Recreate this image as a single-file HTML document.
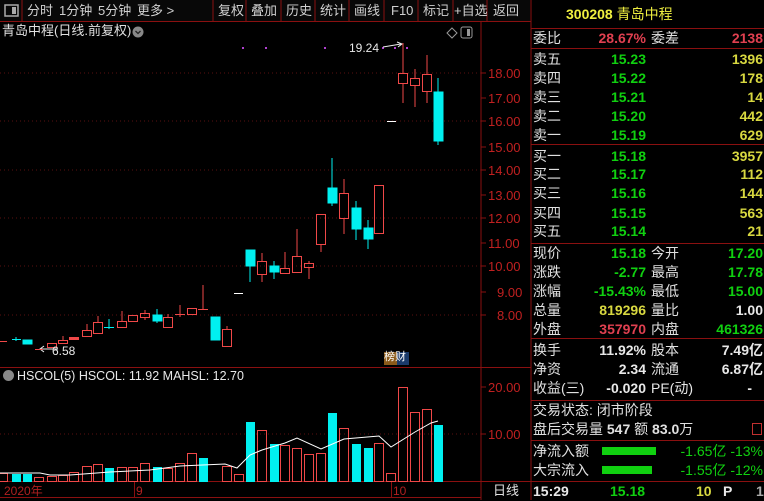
<!DOCTYPE html>
<html><head><meta charset="utf-8"><style>
*{margin:0;padding:0;box-sizing:border-box}
body{width:764px;height:500px;background:#000;overflow:hidden;position:relative;font-family:"Liberation Sans","Noto Sans CJK SC",sans-serif;}
.t{position:absolute;white-space:nowrap;line-height:1}
.tb{font-size:13px;color:#d0d0d0;top:4px}
.r{position:absolute;white-space:nowrap;font-size:14px;line-height:19px;height:19px}
.l{left:533px;color:#e0e0e0}
.v{right:118px;text-align:right;font-weight:bold;font-family:"Liberation Sans",sans-serif}
.l2{left:651px;color:#e0e0e0}
.v2{right:1px;text-align:right;font-weight:bold}
.g{color:#10d010}.y{color:#d8d840}.rd{color:#e04050}.w{color:#e8e8e8}
</style></head><body>
<svg width="764" height="500" style="position:absolute;left:0;top:0">
<rect x="0" y="0" width="530" height="21" fill="#080808"/>
<rect x="5" y="5" width="13" height="11" fill="none" stroke="#aaa" stroke-width="1.5"/><rect x="12" y="7" width="4" height="7" fill="#aaa"/>
<g stroke="#8a1010" stroke-width="1">
<line x1="22" y1="0" x2="22" y2="21"/><line x1="213" y1="0" x2="213" y2="21"/><line x1="246" y1="0" x2="246" y2="21"/><line x1="281" y1="0" x2="281" y2="21"/><line x1="315" y1="0" x2="315" y2="21"/><line x1="349" y1="0" x2="349" y2="21"/><line x1="384" y1="0" x2="384" y2="21"/><line x1="418" y1="0" x2="418" y2="21"/><line x1="453" y1="0" x2="453" y2="21"/><line x1="487" y1="0" x2="487" y2="21"/>
<line x1="0" y1="21.5" x2="531" y2="21.5"/>
<line x1="481" y1="22" x2="481" y2="500"/>
<line x1="531" y1="0" x2="531" y2="500"/>
<line x1="0" y1="367.5" x2="531" y2="367.5"/>
<line x1="0" y1="481.5" x2="764" y2="481.5"/>
<line x1="0" y1="497.5" x2="481" y2="497.5"/>
<line x1="531" y1="28.5" x2="764" y2="28.5"/>
<line x1="531" y1="48.5" x2="764" y2="48.5"/>
<line x1="531" y1="144.5" x2="764" y2="144.5"/>
<line x1="531" y1="243.5" x2="764" y2="243.5"/>
<line x1="531" y1="338.5" x2="764" y2="338.5"/>
<line x1="531" y1="400.5" x2="764" y2="400.5"/>
<line x1="531" y1="440.5" x2="764" y2="440.5"/>
<line x1="134.5" y1="482" x2="134.5" y2="497"/><line x1="391.5" y1="482" x2="391.5" y2="497"/>
</g>
<circle cx="138" cy="32" r="5.5" fill="#888"/><path d="M135.5 31 L138 33.5 L140.5 31" stroke="#222" fill="none" stroke-width="1.3"/>
<path d="M452 28 L457 33 L452 38 L447 33 Z" fill="none" stroke="#999"/>
<rect x="461" y="27" width="11" height="11" rx="2" fill="none" stroke="#999"/><rect x="467" y="29" width="3" height="7" fill="#999"/>
<g stroke="#5a1010" stroke-dasharray="1,3">
<line x1="0" y1="73" x2="481" y2="73"/><line x1="0" y1="121" x2="481" y2="121"/><line x1="0" y1="170" x2="481" y2="170"/><line x1="0" y1="218" x2="481" y2="218"/><line x1="0" y1="266" x2="481" y2="266"/><line x1="0" y1="315" x2="481" y2="315"/><line x1="0" y1="434" x2="481" y2="434"/>
</g>
<g stroke="#8a1010"><line x1="481" y1="73" x2="486" y2="73"/><line x1="481" y1="98" x2="486" y2="98"/><line x1="481" y1="121" x2="486" y2="121"/><line x1="481" y1="147" x2="486" y2="147"/><line x1="481" y1="170" x2="486" y2="170"/><line x1="481" y1="195" x2="486" y2="195"/><line x1="481" y1="218" x2="486" y2="218"/><line x1="481" y1="243" x2="486" y2="243"/><line x1="481" y1="266" x2="486" y2="266"/><line x1="481" y1="292" x2="486" y2="292"/><line x1="481" y1="315" x2="486" y2="315"/><line x1="481" y1="387" x2="486" y2="387"/><line x1="481" y1="434" x2="486" y2="434"/></g>
<g fill="#b040d0"><rect x="242" y="47" width="2" height="2"/><rect x="265" y="47" width="2" height="2"/><rect x="324" y="47" width="2" height="2"/><rect x="382" y="47" width="2" height="2"/><rect x="394" y="47" width="2" height="2"/><rect x="406" y="47" width="2" height="2"/></g>
<path d="M383 47 L401 44 M397 42 L402 44 L398 47" stroke="#eee" fill="none"/>
<path d="M41 349 L58 349 M44 346 L40 349 L44 352" stroke="#eee" fill="none"/>
<g stroke="#f04848" fill="none" stroke-width="1">
<line x1="0" y1="341.5" x2="7" y2="341.5"/>
<line x1="35" y1="349.5" x2="43" y2="349.5"/>
<rect x="47.5" y="343.5" width="9" height="4"/>
<rect x="58.5" y="340.5" width="9" height="3"/><line x1="63" y1="336" x2="63" y2="340"/>
<rect x="69.5" y="337.5" width="9" height="2" fill="#f04848"/>
<rect x="82.5" y="330.5" width="9" height="6"/><line x1="87" y1="324" x2="87" y2="330"/>
<rect x="93.5" y="322.5" width="9" height="11"/><line x1="98" y1="316" x2="98" y2="322"/>
<rect x="117.5" y="321.5" width="9" height="6"/><line x1="122" y1="311" x2="122" y2="321"/>
<rect x="128.5" y="315.5" width="9" height="6"/>
<rect x="140.5" y="313.5" width="9" height="4"/><line x1="145" y1="310" x2="145" y2="313"/><line x1="145" y1="318" x2="145" y2="320"/>
<rect x="163.5" y="317.5" width="9" height="10"/><line x1="168" y1="314" x2="168" y2="317"/>
<line x1="175" y1="314.5" x2="185" y2="314.5"/><line x1="180" y1="305" x2="180" y2="317"/>
<rect x="187.5" y="308.5" width="9" height="6"/>
<line x1="198" y1="309.5" x2="208" y2="309.5"/><line x1="203" y1="285" x2="203" y2="309"/>
<rect x="222.5" y="329.5" width="9" height="17"/><line x1="227" y1="326" x2="227" y2="329"/>
<rect x="257.5" y="261.5" width="9" height="13"/><line x1="262" y1="253" x2="262" y2="261"/><line x1="262" y1="275" x2="262" y2="282"/>
<rect x="280.5" y="268.5" width="9" height="5"/><line x1="285" y1="252" x2="285" y2="268"/>
<rect x="292.5" y="256.5" width="9" height="16"/><line x1="297" y1="229" x2="297" y2="256"/>
<rect x="304.5" y="263.5" width="9" height="4"/><line x1="309" y1="261" x2="309" y2="263"/><line x1="309" y1="268" x2="309" y2="279"/>
<rect x="316.5" y="214.5" width="9" height="30"/><line x1="321" y1="245" x2="321" y2="252"/>
<rect x="339.5" y="193.5" width="9" height="25"/><line x1="344" y1="179" x2="344" y2="193"/><line x1="344" y1="219" x2="344" y2="234"/>
<rect x="374.5" y="185.5" width="9" height="48"/>
<rect x="398.5" y="73.5" width="9" height="10"/><line x1="403" y1="43" x2="403" y2="73"/><line x1="403" y1="84" x2="403" y2="103"/>
<rect x="410.5" y="78.5" width="9" height="7"/><line x1="415" y1="69" x2="415" y2="78"/><line x1="415" y1="86" x2="415" y2="107"/>
<rect x="422.5" y="74.5" width="9" height="17"/><line x1="427" y1="55" x2="427" y2="74"/><line x1="427" y1="92" x2="427" y2="103"/>
</g>
<g fill="#00f0f0" stroke="#00f0f0">
<line x1="12" y1="339.5" x2="21" y2="339.5"/><line x1="16" y1="337" x2="16" y2="341"/>
<rect x="23" y="340" width="9" height="4"/>
<line x1="104" y1="327.5" x2="114" y2="327.5"/><line x1="109" y1="319" x2="109" y2="329"/>
<rect x="153" y="315" width="9" height="6"/><line x1="157" y1="309" x2="157" y2="323"/>
<rect x="211" y="317" width="9" height="23"/>
<rect x="246" y="250" width="9" height="16"/><line x1="250" y1="266" x2="250" y2="282"/>
<rect x="270" y="266" width="9" height="6"/><line x1="274" y1="261" x2="274" y2="279"/>
<rect x="328" y="188" width="9" height="15"/><line x1="332" y1="158" x2="332" y2="206"/>
<rect x="352" y="208" width="9" height="21"/><line x1="356" y1="201" x2="356" y2="240"/>
<rect x="364" y="228" width="9" height="11"/><line x1="368" y1="220" x2="368" y2="249"/>
<rect x="434" y="92" width="9" height="49"/><line x1="438" y1="78" x2="438" y2="145"/>
</g>
<g stroke="#fff"><line x1="234" y1="293.5" x2="243" y2="293.5"/><line x1="387" y1="121.5" x2="396" y2="121.5"/></g>
<rect x="384" y="352" width="13" height="13" fill="#8a5a1a"/><rect x="397" y="352" width="12" height="13" fill="#1a3a6a"/>
<g stroke="#f04848" fill="none">
<rect x="-1.5" y="473.5" width="9" height="8"/><rect x="34.5" y="477.5" width="9" height="4"/><rect x="47.5" y="476.5" width="9" height="5"/><rect x="58.5" y="475.5" width="9" height="6"/><rect x="69.5" y="472.5" width="9" height="9"/><rect x="82.5" y="466.5" width="9" height="15"/><rect x="93.5" y="464.5" width="9" height="17"/><rect x="117.5" y="467.5" width="9" height="14"/><rect x="128.5" y="467.5" width="9" height="14"/><rect x="140.5" y="463.5" width="9" height="18"/><rect x="163.5" y="468.5" width="9" height="13"/><rect x="175.5" y="463.5" width="9" height="18"/><rect x="187.5" y="453.5" width="9" height="28"/><rect x="222.5" y="466.5" width="9" height="15"/><rect x="234.5" y="474.5" width="9" height="7"/><rect x="257.5" y="430.5" width="9" height="51"/><rect x="280.5" y="445.5" width="9" height="36"/><rect x="292.5" y="448.5" width="9" height="33"/><rect x="304.5" y="454.5" width="9" height="27"/><rect x="316.5" y="453.5" width="9" height="28"/><rect x="339.5" y="428.5" width="9" height="53"/><rect x="374.5" y="443.5" width="9" height="38"/><rect x="386.5" y="473.5" width="9" height="8"/><rect x="398.5" y="387.5" width="9" height="94"/><rect x="410.5" y="412.5" width="9" height="69"/><rect x="422.5" y="409.5" width="9" height="72"/>
</g>
<g fill="#00f0f0"><rect x="12" y="474" width="9" height="8"/><rect x="23" y="474" width="9" height="8"/><rect x="105" y="468" width="9" height="14"/><rect x="153" y="467" width="9" height="15"/><rect x="199" y="458" width="9" height="24"/><rect x="246" y="422" width="9" height="60"/><rect x="270" y="444" width="9" height="38"/><rect x="328" y="413" width="9" height="69"/><rect x="352" y="444" width="9" height="38"/><rect x="364" y="448" width="9" height="34"/><rect x="434" y="425" width="9" height="57"/></g>
<polyline fill="none" stroke="#fff" points="0,473 40,473 50,475 70,475 110,472 150,470 180,466 225,464 237,468 250,455 262,450 285,443 297,438 321,449 344,439 379,436 391,447 415,432 431,423 438,421"/>
</svg>
<div class="t tb" style="left:27px">分时</div><div class="t tb" style="left:59px">1分钟</div><div class="t tb" style="left:98px">5分钟</div><div class="t tb" style="left:137px">更多 &gt;</div>
<div class="t tb" style="left:218px">复权</div><div class="t tb" style="left:251px">叠加</div><div class="t tb" style="left:286px">历史</div><div class="t tb" style="left:320px">统计</div><div class="t tb" style="left:354px">画线</div><div class="t tb" style="left:391px">F10</div><div class="t tb" style="left:423px">标记</div><div class="t tb" style="left:454px">+自选</div><div class="t tb" style="left:493px">返回</div>
<div class="t" style="left:2px;top:24px;font-size:13px;color:#e0e0e0">青岛中程(日线.前复权)</div>
<div class="t" style="left:349px;top:42px;font-size:12px;color:#e8e8e8">19.24</div>
<div class="t" style="left:52px;top:345px;font-size:12px;color:#e8e8e8">6.58</div>
<div class="t" style="left:384px;top:352px;font-size:11px;color:#fff">榜财</div>
<div class="t" style="left:17px;top:370px;font-size:12.5px;color:#e8e8e8">HSCOL(5) HSCOL: 11.92 MAHSL: 12.70</div>
<div style="position:absolute;left:3px;top:370px;width:11px;height:11px;border-radius:50%;background:#888"></div>
<div class="t" style="left:4px;top:485px;font-size:12px;color:#b02020">2020年</div>
<div class="t" style="left:136px;top:485px;font-size:12px;color:#b02020">9</div>
<div class="t" style="left:393px;top:485px;font-size:12px;color:#b02020">10</div>
<div class="t" style="left:493px;top:484px;font-size:13px;color:#e0e0e0">日线</div>
<div style="position:absolute;left:488px;top:0;font-size:13px;color:#c02020;line-height:1">
<div class="t" style="top:67px">18.00</div><div class="t" style="top:92px">17.00</div><div class="t" style="top:115px">16.00</div><div class="t" style="top:141px">15.00</div><div class="t" style="top:164px">14.00</div><div class="t" style="top:189px">13.00</div><div class="t" style="top:212px">12.00</div><div class="t" style="top:237px">11.00</div><div class="t" style="top:260px">10.00</div><div class="t" style="top:286px;left:9px">9.00</div><div class="t" style="top:309px;left:9px">8.00</div><div class="t" style="top:381px">20.00</div><div class="t" style="top:428px">10.00</div>
</div>
<div class="t" style="left:566px;top:7px;font-size:14px;color:#f0f040;font-weight:bold">300208 <span style="font-weight:normal">青岛中程</span></div>
<div class="r l" style="top:29px">委比</div><div class="r v rd" style="top:29px">28.67%</div><div class="r l2" style="top:29px">委差</div><div class="r v2 rd" style="top:29px">2138</div>
<div class="r l" style="top:50px">卖五</div><div class="r v g" style="top:50px">15.23</div><div class="r v2 y" style="top:50px">1396</div>
<div class="r l" style="top:69px">卖四</div><div class="r v g" style="top:69px">15.22</div><div class="r v2 y" style="top:69px">178</div>
<div class="r l" style="top:88px">卖三</div><div class="r v g" style="top:88px">15.21</div><div class="r v2 y" style="top:88px">14</div>
<div class="r l" style="top:107px">卖二</div><div class="r v g" style="top:107px">15.20</div><div class="r v2 y" style="top:107px">442</div>
<div class="r l" style="top:126px">卖一</div><div class="r v g" style="top:126px">15.19</div><div class="r v2 y" style="top:126px">629</div>
<div class="r l" style="top:147px">买一</div><div class="r v g" style="top:147px">15.18</div><div class="r v2 y" style="top:147px">3957</div>
<div class="r l" style="top:165px">买二</div><div class="r v g" style="top:165px">15.17</div><div class="r v2 y" style="top:165px">112</div>
<div class="r l" style="top:184px">买三</div><div class="r v g" style="top:184px">15.16</div><div class="r v2 y" style="top:184px">144</div>
<div class="r l" style="top:204px">买四</div><div class="r v g" style="top:204px">15.15</div><div class="r v2 y" style="top:204px">563</div>
<div class="r l" style="top:222px">买五</div><div class="r v g" style="top:222px">15.14</div><div class="r v2 y" style="top:222px">21</div>
<div class="r l" style="top:244px">现价</div><div class="r v g" style="top:244px">15.18</div><div class="r l2" style="top:244px">今开</div><div class="r v2 g" style="top:244px">17.20</div>
<div class="r l" style="top:263px">涨跌</div><div class="r v g" style="top:263px">-2.77</div><div class="r l2" style="top:263px">最高</div><div class="r v2 g" style="top:263px">17.78</div>
<div class="r l" style="top:282px">涨幅</div><div class="r v g" style="top:282px">-15.43%</div><div class="r l2" style="top:282px">最低</div><div class="r v2 g" style="top:282px">15.00</div>
<div class="r l" style="top:301px">总量</div><div class="r v y" style="top:301px">819296</div><div class="r l2" style="top:301px">量比</div><div class="r v2 w" style="top:301px">1.00</div>
<div class="r l" style="top:320px">外盘</div><div class="r v rd" style="top:320px">357970</div><div class="r l2" style="top:320px">内盘</div><div class="r v2 g" style="top:320px">461326</div>
<div class="r l" style="top:341px">换手</div><div class="r v w" style="top:341px">11.92%</div><div class="r l2" style="top:341px">股本</div><div class="r v2 w" style="top:341px">7.49亿</div>
<div class="r l" style="top:360px">净资</div><div class="r v w" style="top:360px">2.34</div><div class="r l2" style="top:360px">流通</div><div class="r v2 w" style="top:360px">6.87亿</div>
<div class="r l" style="top:379px">收益(三)</div><div class="r v w" style="top:379px">-0.020</div><div class="r l2 w" style="top:379px">PE(动)</div><div class="r v2 w" style="top:379px;right:12px">-</div>
<div class="r l" style="top:401px">交易状态: 闭市阶段</div>
<div class="r l" style="top:420px">盘后交易量 <b>547</b> 额 <b>83.0</b>万</div>
<div style="position:absolute;left:752px;top:423px;width:10px;height:12px;border:1px solid #c03030"></div>
<div class="r l" style="top:442px">净流入额</div><div style="position:absolute;left:602px;top:447px;width:54px;height:8px;background:#10d010"></div><div class="r v2 g" style="top:442px;font-weight:normal">-1.65亿 -13%</div>
<div class="r l" style="top:461px">大宗流入</div><div style="position:absolute;left:602px;top:466px;width:50px;height:8px;background:#10d010"></div><div class="r v2 g" style="top:461px;font-weight:normal">-1.55亿 -12%</div>
<div class="r w" style="left:533px;top:482px;font-weight:bold">15:29</div>
<div class="r g" style="left:610px;top:482px;font-weight:bold">15.18</div>
<div class="r y" style="left:696px;top:482px;font-weight:bold">10</div>
<div class="r w" style="left:723px;top:482px;font-weight:bold">P</div>
<div class="r" style="left:756px;top:482px;color:#aaa;font-weight:bold">1</div>
</body></html>
